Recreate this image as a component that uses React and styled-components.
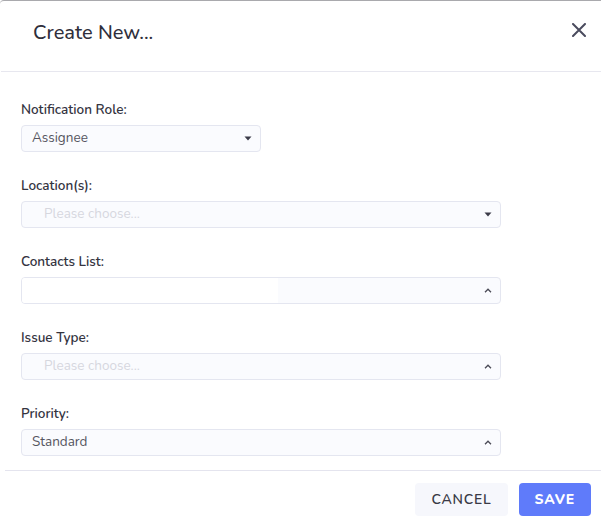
import React from "react";
import styled, { createGlobalStyle } from "styled-components";

const GlobalStyle = createGlobalStyle`
  html, body {
    margin: 0;
    padding: 0;
    background: #fff;
  }
  body {
    font-family: "Nunito", "Lato", "Noto Sans", sans-serif;
  }
`;

const Modal = styled.div`
  width: 601px;
  height: 527px;
  box-sizing: border-box;
  border-top: 1px solid #a9a9ad;
  border-top-left-radius: 4px;
  background: #fff;
  display: flex;
  flex-direction: column;
`;

const Header = styled.div`
  height: 70px;
  display: flex;
  align-items: center;
  justify-content: space-between;
  padding: 0 12px 0 32px;
  border-bottom: 1px solid #e7e7ef;
  margin-left: 1px;
`;

const Title = styled.h2`
  margin: 0;
  margin-top: -8px;
  font-size: 20px;
  font-weight: 500;
  color: #2f2f3b;
`;

const CloseButton = styled.button`
  border: none;
  background: transparent;
  padding: 0;
  width: 20px;
  height: 20px;
  display: flex;
  align-items: center;
  justify-content: center;
  margin-top: -12px;
  cursor: pointer;
`;

const Body = styled.div`
  padding: 29px 0 14px 21px;
  display: flex;
  flex-direction: column;
  gap: 25px;
`;

const Field = styled.div`
  display: flex;
  flex-direction: column;
  gap: 6px;
`;

const Label = styled.label`
  font-size: 13.5px;
  line-height: 18px;
  font-weight: 600;
  color: #34343f;
`;

const SelectBox = styled.div`
  width: ${(p) => p.$width}px;
  height: 27px;
  box-sizing: border-box;
  border: 1px solid #e4e6f0;
  border-radius: 4px;
  background: #fafbfe;
  display: flex;
  align-items: center;
  padding-right: 8px;
  overflow: hidden;
`;

const Value = styled.span`
  flex: 1;
  font-size: 13.5px;
  margin-top: -2px;
  color: ${(p) => (p.$placeholder ? "#d6d7de" : "#55555f")};
  padding-left: ${(p) => (p.$placeholder ? 22 : 10)}px;
`;

const SearchInput = styled.div`
  width: 256px;
  height: 100%;
  background: #fff;
`;

const Spacer = styled.div`
  flex: 1;
`;

const Footer = styled.div`
  margin-left: 5px;
  border-top: 1px solid #e4e4ee;
  display: flex;
  justify-content: flex-end;
  gap: 11px;
  padding: 12px 10px 0 0;
`;

const Button = styled.button`
  height: 33px;
  border: none;
  border-radius: 4px;
  padding: 0 16px;
  font-family: inherit;
  font-size: 14px;
  letter-spacing: 0.8px;
  font-weight: ${(p) => (p.$primary ? 800 : 600)};
  background: ${(p) => (p.$primary ? "#5f7bfa" : "#f6f7fc")};
  color: ${(p) => (p.$primary ? "#fff" : "#3a3a46")};
  cursor: pointer;
`;

const CaretDown = () => (
  <svg width="8" height="5" viewBox="0 0 8 5">
    <path d="M0.5 0.5 L7.5 0.5 L4 4.5 Z" fill="#3b3b48" />
  </svg>
);

const ChevronUp = () => (
  <svg width="8" height="5" viewBox="0 0 8 5">
    <path d="M1 4.2 L4 1.2 L7 4.2" fill="none" stroke="#4a4a56" strokeWidth="1.3" />
  </svg>
);

const CloseIcon = () => (
  <svg width="14" height="14" viewBox="0 0 14 14">
    <path d="M1 1 L13 13 M13 1 L1 13" stroke="#4a4b5e" strokeWidth="2" strokeLinecap="round" />
  </svg>
);

const fields = [
  { label: "Notification Role:", value: "Assignee", width: 240, icon: "down" },
  { label: "Location(s):", placeholder: "Please choose...", width: 480, icon: "down" },
  { label: "Contacts List:", search: true, width: 480, icon: "up" },
  { label: "Issue Type:", placeholder: "Please choose...", width: 480, icon: "up" },
  { label: "Priority:", value: "Standard", width: 480, icon: "up" },
];

export default function App() {
  return (
    <>
      <GlobalStyle />
      <Modal>
        <Header>
          <Title>Create New...</Title>
          <CloseButton aria-label="Close">
            <CloseIcon />
          </CloseButton>
        </Header>
        <Body>
          {fields.map((f) => (
            <Field key={f.label}>
              <Label>{f.label}</Label>
              <SelectBox $width={f.width}>
                {f.search ? (
                  <>
                    <SearchInput />
                    <Spacer />
                  </>
                ) : (
                  <Value $placeholder={!!f.placeholder}>{f.value || f.placeholder}</Value>
                )}
                {f.icon === "down" ? <CaretDown /> : <ChevronUp />}
              </SelectBox>
            </Field>
          ))}
        </Body>
        <Footer>
          <Button>CANCEL</Button>
          <Button $primary>SAVE</Button>
        </Footer>
      </Modal>
    </>
  );
}
